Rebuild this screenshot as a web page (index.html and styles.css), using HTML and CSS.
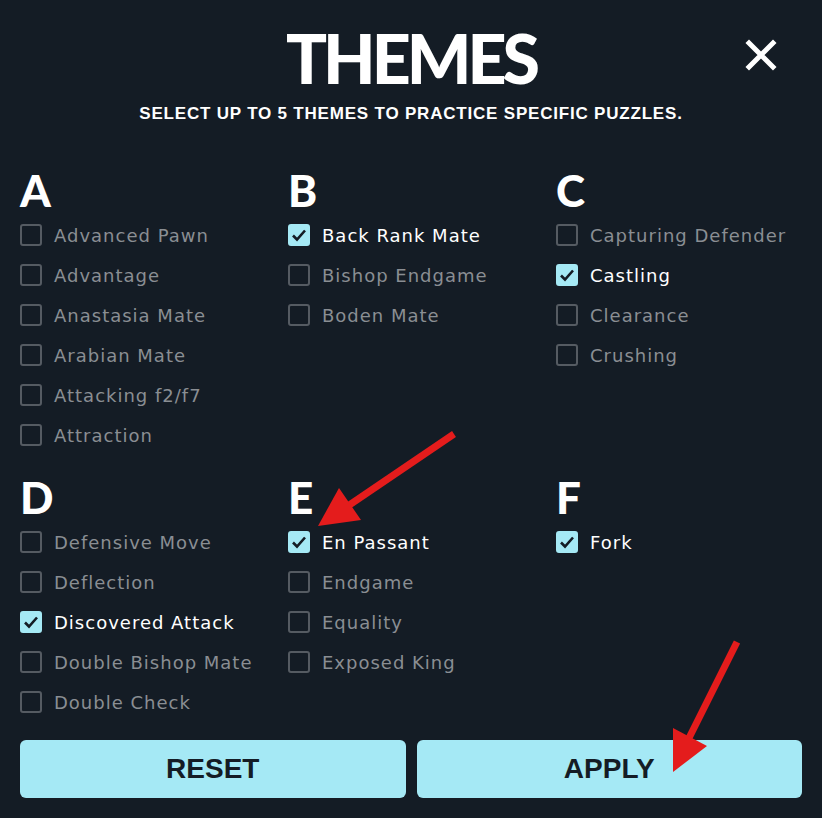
FILE: index.html
```html
<!DOCTYPE html>
<html lang="en">
<head>
  <meta charset="UTF-8" />
  <title>Themes</title>
  <link rel="stylesheet" href="styles.css">
</head>
<body>
  <div class="screen">
    <div class="top">
      <h1 class="title">THEMES</h1>
      <button class="close" aria-label="Close">
        <svg width="32" height="32" viewBox="0 0 32 32">
          <path d="M4 4 L28 28 M28 4 L4 28" stroke="#fff" stroke-width="5" stroke-linecap="square" fill="none"/>
        </svg>
      </button>
      <p class="subtitle">SELECT UP TO 5 THEMES TO PRACTICE SPECIFIC PUZZLES.</p>
    </div>

    <div class="groups">
      <section class="group">
        <h2>A</h2>
        <ul class="list">
          <li class="item"><span class="box"></span>Advanced Pawn</li>
          <li class="item"><span class="box"></span>Advantage</li>
          <li class="item"><span class="box"></span>Anastasia Mate</li>
          <li class="item"><span class="box"></span>Arabian Mate</li>
          <li class="item"><span class="box"></span>Attacking f2/f7</li>
          <li class="item"><span class="box"></span>Attraction</li>
        </ul>
      </section>
      <section class="group">
        <h2>B</h2>
        <ul class="list">
          <li class="item checked"><span class="box"></span>Back Rank Mate</li>
          <li class="item"><span class="box"></span>Bishop Endgame</li>
          <li class="item"><span class="box"></span>Boden Mate</li>
        </ul>
      </section>
      <section class="group">
        <h2>C</h2>
        <ul class="list">
          <li class="item"><span class="box"></span>Capturing Defender</li>
          <li class="item checked"><span class="box"></span>Castling</li>
          <li class="item"><span class="box"></span>Clearance</li>
          <li class="item"><span class="box"></span>Crushing</li>
        </ul>
      </section>
      <section class="group">
        <h2>D</h2>
        <ul class="list">
          <li class="item"><span class="box"></span>Defensive Move</li>
          <li class="item"><span class="box"></span>Deflection</li>
          <li class="item checked"><span class="box"></span>Discovered Attack</li>
          <li class="item"><span class="box"></span>Double Bishop Mate</li>
          <li class="item"><span class="box"></span>Double Check</li>
        </ul>
      </section>
      <section class="group">
        <h2>E</h2>
        <ul class="list">
          <li class="item checked"><span class="box"></span>En Passant</li>
          <li class="item"><span class="box"></span>Endgame</li>
          <li class="item"><span class="box"></span>Equality</li>
          <li class="item"><span class="box"></span>Exposed King</li>
        </ul>
      </section>
      <section class="group">
        <h2>F</h2>
        <ul class="list">
          <li class="item checked"><span class="box"></span>Fork</li>
        </ul>
      </section>
    </div>

    <div class="actions">
      <button class="btn">RESET</button>
      <button class="btn">APPLY</button>
    </div>

    <!-- red pointer arrows drawn on top -->
    <svg class="arrows" width="822" height="818" viewBox="0 0 822 818">
      <g fill="#e41c1c" stroke="#e41c1c">
        <line x1="454" y1="434" x2="345" y2="508" stroke-width="7"/>
        <polygon points="318,526 339,488 361,520" stroke="none"/>
        <line x1="737" y1="642" x2="688" y2="740" stroke-width="7"/>
        <polygon points="673,772 673,728 707,746" stroke="none"/>
      </g>
    </svg>
  </div>
</body>
</html>
```

FILE: styles.css
```css
:root {
  --bg: #141c25;
  --accent: #a5e9f5;
  --muted: #8a8e93;
  --box-border: #555b62;
}

body {
  margin: 0;
  background: var(--bg);
  color: #fff;
  font-family: "DejaVu Sans", sans-serif;
}

.screen {
  position: relative;
  width: 822px;
  height: 818px;
  overflow: hidden;
}

.top {
  position: relative;
  text-align: center;
  padding-top: 20px;
}

.title {
  margin: 0;
  font-family: "Lato", sans-serif;
  font-weight: 900;
  font-size: 68px;
  line-height: 76px;
  letter-spacing: -4px;
}

.close {
  position: absolute;
  top: 39px;
  right: 45px;
  background: none;
  border: none;
  padding: 0;
  cursor: pointer;
}

.close svg {
  display: block;
}

.subtitle {
  margin: 8px 0 0;
  font-family: "Liberation Sans", Arial, sans-serif;
  font-weight: bold;
  font-size: 17px;
  line-height: 20px;
  letter-spacing: 0.8px;
}

.groups {
  display: grid;
  grid-template-columns: 268px 268px 1fr;
  row-gap: 17px;
  padding: 41px 0 0 20px;
}

.group h2 {
  margin: 0;
  height: 50px;
  font-family: "Lato", sans-serif;
  font-weight: 900;
  font-size: 44px;
  line-height: 50px;
}

.list {
  list-style: none;
  margin: 0;
  padding: 0;
}

.item {
  display: flex;
  align-items: center;
  gap: 12px;
  height: 40px;
  font-size: 18px;
  letter-spacing: 1px;
  color: var(--muted);
}

.box {
  flex: none;
  box-sizing: border-box;
  width: 22px;
  height: 22px;
  border: 2px solid var(--box-border);
  border-radius: 3px;
}

.item.checked {
  color: #fff;
}

.item.checked .box {
  border-color: var(--accent);
  background: var(--accent) url("data:image/svg+xml,%3Csvg xmlns='http://www.w3.org/2000/svg' viewBox='0 0 22 22'%3E%3Cpath d='M5 11.5 L9 15.5 L17 6.5' stroke='%23141c25' stroke-width='2.6' fill='none'/%3E%3C/svg%3E") center / 22px 22px no-repeat;
}

.actions {
  display: flex;
  gap: 11px;
  padding: 18px 20px 0;
}

.btn {
  flex: 1;
  height: 58px;
  border: none;
  border-radius: 6px;
  background: var(--accent);
  color: var(--bg);
  font-family: "Liberation Sans", Arial, sans-serif;
  font-weight: bold;
  font-size: 28px;
  cursor: pointer;
}

.arrows {
  position: absolute;
  top: 0;
  left: 0;
  pointer-events: none;
}
```
